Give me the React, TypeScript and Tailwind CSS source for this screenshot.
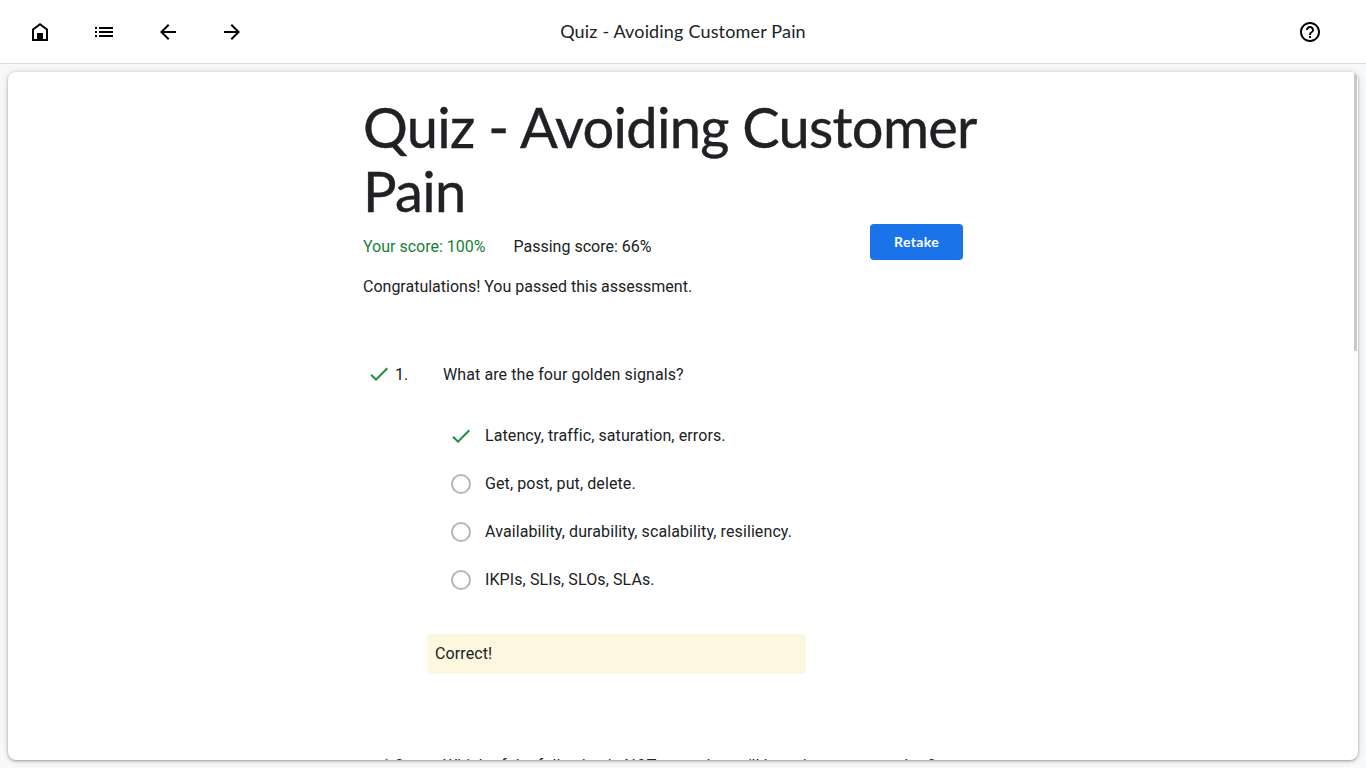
import type { ReactNode } from "react";

function Icon({ d, className }: { d: string; className?: string }) {
  return (
    <svg viewBox="0 0 24 24" className={`size-6 shrink-0 ${className ?? ""}`} fill="currentColor" aria-hidden="true">
      <path d={d} />
    </svg>
  );
}

const HOME = "M6 19h3v-6h6v6h3v-9l-6-4.500L6 10v9zm-2 2V9l8-6 8 6v12H4z";
const LIST = "M3 9h2V7H3v2zm0 4h2v-2H3v2zm0 4h2v-2H3v2zm4 0h14v-2H7v2zm0-4h14v-2H7v2zm0-6v2h14V7H7z";
const BACK = "M20 11H7.830l5.590-5.590L12 4l-8 8 8 8 1.410-1.410L7.830 13H20v-2z";
const FORWARD = "M12 4l-1.410 1.410L16.170 11H4v2h12.170l-5.580 5.590L12 20l8-8z";
const HELP =
  "M11 18h2v-2h-2v2zm1-16C6.480 2 2 6.480 2 12s4.480 10 10 10 10-4.480 10-10S17.520 2 12 2zm0 18c-4.410 0-8-3.590-8-8s3.590-8 8-8 8 3.590 8 8-3.590 8-8 8zm0-14c-2.210 0-4 1.790-4 4h2c0-1.100.9-2 2-2s2 .9 2 2c0 2-3 1.750-3 5h2c0-2.250 3-2.500 3-5 0-2.210-1.790-4-4-4z";
const CHECK = "M9 16.170 4.830 12l-1.420 1.410L9 19 21 7l-1.410-1.410z";

function IconButton({ label, d }: { label: string; d: string }) {
  return (
    <button aria-label={label} className="flex size-16 items-center justify-center text-black">
      <Icon d={d} />
    </button>
  );
}

function Question({ number, text, children }: { number: number; text: string; children?: ReactNode }) {
  return (
    <section className="tracking-[0.1px]">
      <div className="flex h-6 items-center">
        <div className="flex w-20 items-center pl-1">
          <Icon d={CHECK} className="mb-0.5 text-[#1e8e3e]" />
          <span className="pl-1">{number}.</span>
        </div>
        <p className="whitespace-nowrap">{text}</p>
      </div>
      {children}
    </section>
  );
}

const options = [
  { text: "Latency, traffic, saturation, errors.", correct: true },
  { text: "Get, post, put, delete.", correct: false },
  { text: "Availability, durability, scalability, resiliency.", correct: false },
  { text: "IKPIs, SLIs, SLOs, SLAs.", correct: false },
];

export default function App() {
  return (
    <div className="flex h-screen flex-col overflow-hidden bg-[#f8f9fa] font-['Roboto',sans-serif] text-base leading-6 text-[#202124]">
      <header className="flex h-16 shrink-0 items-center border-b border-[#dadce0] bg-white">
        <nav className="flex flex-1">
          <div className="flex pl-2">
            <IconButton label="Home" d={HOME} />
            <IconButton label="Contents" d={LIST} />
            <IconButton label="Previous" d={BACK} />
            <IconButton label="Next" d={FORWARD} />
          </div>
        </nav>
        <div className="whitespace-nowrap px-2 pb-0.5 font-['Lato',sans-serif] text-[18px] tracking-[0.17px]">
          Quiz - Avoiding Customer Pain
        </div>
        <div className="flex flex-1 justify-end">
          <div className="pr-6">
            <IconButton label="Help" d={HELP} />
          </div>
        </div>
      </header>
      <main className="m-2 flex min-h-0 flex-1 overflow-hidden rounded-lg bg-white shadow-[0_1px_2px_0_rgba(60,64,67,0.3),0_1px_3px_1px_rgba(60,64,67,0.15),0_0_10px_rgba(60,64,67,0.12)]">
        <div className="flex-1 pl-[355px] pt-[23px]">
          <h1 className="w-[640px] font-['Lato',sans-serif] text-[56px] leading-16 tracking-[-0.7px] [-webkit-text-stroke:0.4px_#202124]">
            Quiz - Avoiding Customer Pain
          </h1>
          <div className="mt-px flex h-9 w-[600px] justify-between">
            <div className="flex gap-7 pt-[11px]">
              <span className="text-[#188038]">Your score: 100%</span>
              <span>Passing score: 66%</span>
            </div>
            <button className="h-9 w-[93px] rounded bg-[#1a73e8] font-['Lato',sans-serif] text-[14px] font-bold tracking-[0.35px] text-white">
              Retake
            </button>
          </div>
          <p className="mt-[15px]">Congratulations! You passed this assessment.</p>
          <div className="mt-16">
            <Question number={1} text="What are the four golden signals?">
              <ul className="mt-[25px] pl-[86px]">
                {options.map((o) => (
                  <li key={o.text} className="flex h-12 items-center">
                    {o.correct ? (
                      <Icon d={CHECK} className="text-[#1e8e3e]" />
                    ) : (
                      <span className="m-0.5 size-5 rounded-full border-2 border-[#b5b5b5]" />
                    )}
                    <span className="pl-3">{o.text}</span>
                  </li>
                ))}
              </ul>
              <div className="ml-16 mt-[30px] flex h-10 w-[379px] items-center rounded bg-[#fef7e0] px-2">Correct!</div>
            </Question>
          </div>
          <div className="mt-20">
            <Question number={2} text="Which of the following is NOT a metric you'll be using to set an alert?" />
          </div>
        </div>
        <div className="mr-px mt-0.5 h-[277px] w-[3px] bg-[#c8c8c8]" />
      </main>
    </div>
  );
}
